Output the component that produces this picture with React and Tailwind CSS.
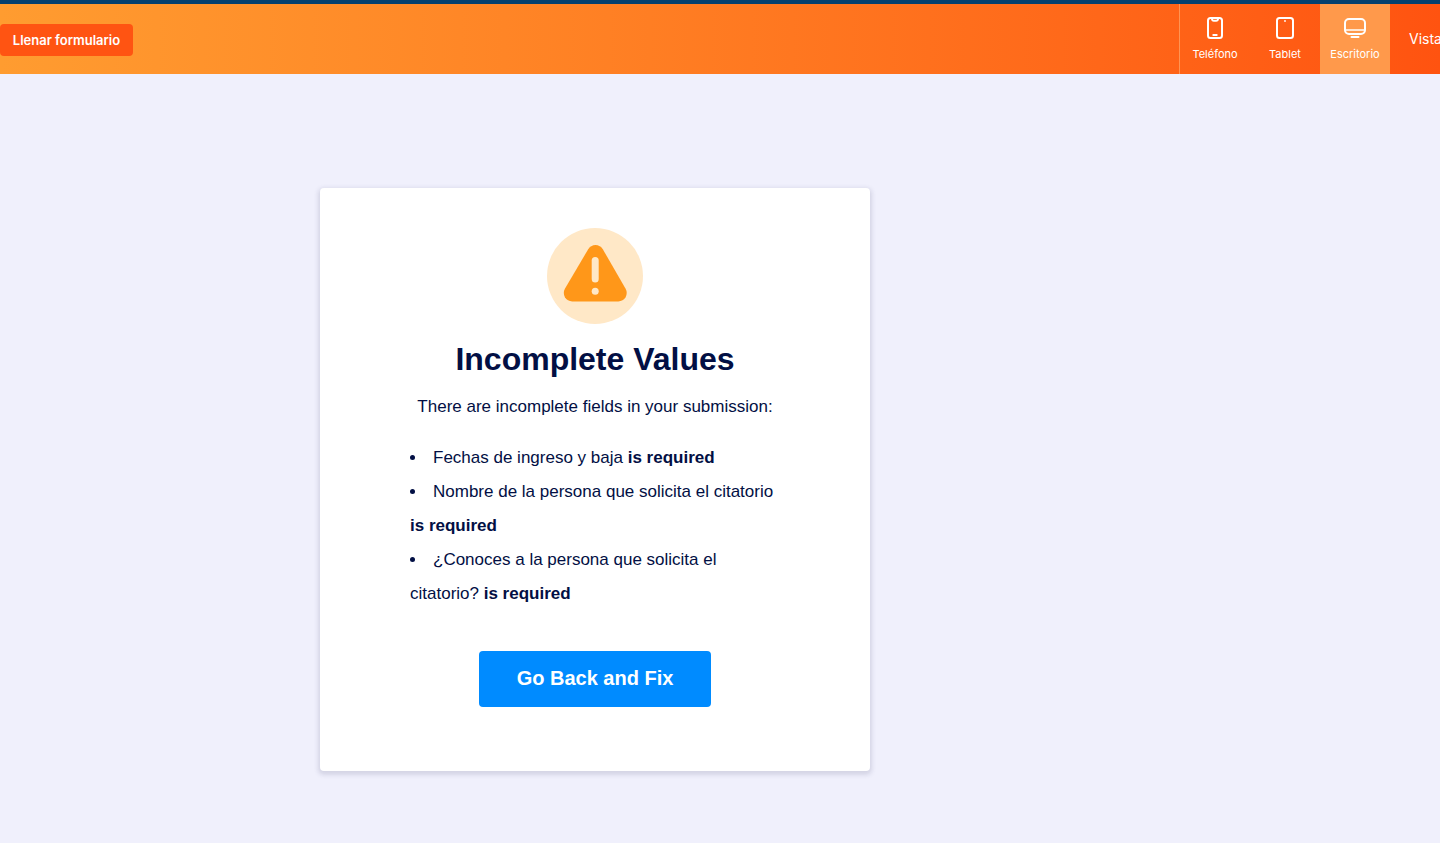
const ICON = {
  fill: 'none',
  stroke: 'currentColor',
  strokeWidth: 2,
  strokeLinecap: 'round',
  strokeLinejoin: 'round',
  'aria-hidden': true,
};

function PhoneIcon() {
  return (
    <svg className="size-6" viewBox="0 0 24 24" {...ICON}>
      <rect x="5" y="2" width="14" height="20" rx="2.5" />
      <path d="M9 2.5v.5a1.8 1.8 0 0 0 1.8 1.8h2.4A1.8 1.8 0 0 0 15 3v-.5" />
      <path d="M10.3 19h3.4" />
    </svg>
  );
}

function TabletIcon() {
  return (
    <svg className="size-6" viewBox="0 0 24 24" {...ICON}>
      <rect x="4" y="2" width="16" height="20" rx="2.5" />
      <circle cx="12" cy="5" r="0.9" fill="currentColor" stroke="none" />
    </svg>
  );
}

function DesktopIcon() {
  return (
    <svg className="size-6" viewBox="0 0 24 24" {...ICON}>
      <rect x="2" y="3" width="20" height="15" rx="4" />
      <path d="M2.5 14h19" strokeWidth="1.6" />
      <path d="M8.5 21h7" />
    </svg>
  );
}

const DEVICES = [
  { label: 'Teléfono', Icon: PhoneIcon },
  { label: 'Tablet', Icon: TabletIcon },
  { label: 'Escritorio', Icon: DesktopIcon, active: true },
];

const ERRORS = [
  'Fechas de ingreso y baja',
  'Nombre de la persona que solicita el citatorio',
  '¿Conoces a la persona que solicita el citatorio?',
];

function Toolbar() {
  return (
    <header className="flex h-[74px] items-stretch justify-between overflow-hidden border-t-4 border-[#04406f] bg-linear-to-r from-[#ff9c30] to-[#ff5310] font-['Inter',sans-serif] text-white">
      <div className="flex items-center pt-0.5">
        <button type="button" className="h-8 w-[133px] rounded bg-[#ff5412] pt-0.5 text-[13px] font-semibold">
          Llenar formulario
        </button>
      </div>
      <nav className="flex">
        <div className="flex border-l border-[#ff9453]">
          {DEVICES.map(({ label, Icon, active }) => (
            <button
              key={label}
              type="button"
              aria-pressed={!!active}
              className={`flex w-[70px] flex-col items-center gap-1 pt-3 text-[11px] leading-5 ${active ? 'bg-[#ff994b]' : ''}`}
            >
              <Icon />
              {label}
            </button>
          ))}
        </div>
        <a href="#vista" className="flex w-[50px] items-center overflow-hidden pl-[19px] text-sm whitespace-nowrap">
          Vista
        </a>
      </nav>
    </header>
  );
}

function WarningIcon() {
  return (
    <svg className="size-24" viewBox="0 0 96 96" aria-hidden="true">
      <circle cx="48" cy="48" r="48" fill="#ffe8c7" />
      <path
        d="M41.2 21.2a8.5 8.5 0 0 1 14.6 0L78.6 60.8a8.5 8.5 0 0 1-7.3 12.7H25.2a8.5 8.5 0 0 1-7.3-12.7Z"
        fill="#ff9719"
      />
      <path d="M48.2 32.5v18.5" stroke="#ffe8c7" strokeWidth="7" strokeLinecap="round" />
      <circle cx="48.2" cy="63.3" r="3.5" fill="#ffe8c7" />
    </svg>
  );
}

export default function App() {
  return (
    <div className="min-h-screen overflow-x-hidden bg-[#f0f0fc] font-['Liberation_Sans',Arial,sans-serif] text-[#020f44]">
      <Toolbar />
      <main className="px-4 pt-[114px] pb-[72px] md:pl-80">
        <section className="flex w-full max-w-[550px] flex-col items-center rounded bg-white px-[90px] pt-10 pb-16 shadow-[0_2px_4px_2px_rgba(80,80,120,0.17)]">
          <WarningIcon />
          <h1 className="mt-[15px] text-center text-[32px] leading-10 font-bold">Incomplete Values</h1>
          <p className="mt-[11px] text-center text-[17px] leading-[34px]">
            There are incomplete fields in your submission:
          </p>
          <ul className="mt-[17px] w-full list-inside list-disc text-[17px] leading-[34px]">
            {ERRORS.map((field) => (
              <li key={field}>
                {field} <strong className="font-bold">is required</strong>
              </li>
            ))}
          </ul>
          <button
            type="button"
            className="mt-10 h-14 w-[232px] rounded bg-[#008bff] pb-0.5 text-xl font-bold text-white"
          >
            Go Back and Fix
          </button>
        </section>
      </main>
    </div>
  );
}
